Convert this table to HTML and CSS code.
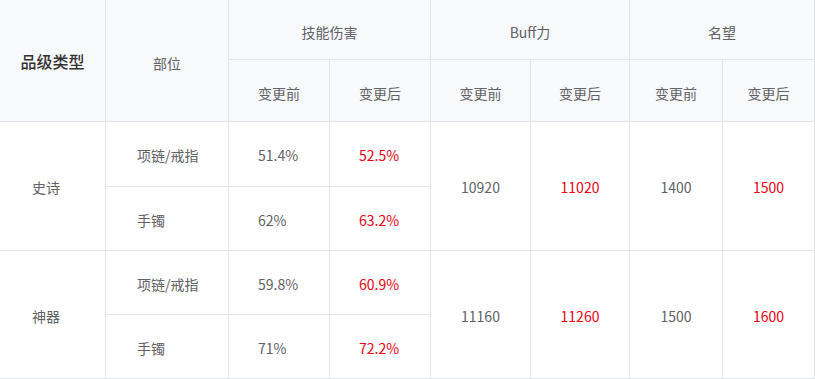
FILE: index.html
```html
<!DOCTYPE html>
<html lang="zh">
<head>
<meta charset="utf-8">
<link rel="stylesheet" href="styles.css">
</head>
<body>
<table class="tbl">
  <colgroup>
    <col class="c1"><col class="c2"><col class="c3"><col class="c4">
    <col class="c5"><col class="c6"><col class="c7"><col class="c8">
  </colgroup>
  <thead>
    <tr class="h1">
      <th rowspan="2" class="grade">品级类型</th>
      <th rowspan="2">部位</th>
      <th colspan="2">技能伤害</th>
      <th colspan="2">Buff力</th>
      <th colspan="2">名望</th>
    </tr>
    <tr class="h2">
      <th>变更前</th><th>变更后</th>
      <th>变更前</th><th>变更后</th>
      <th>变更前</th><th>变更后</th>
    </tr>
  </thead>
  <tbody>
    <tr class="r1">
      <td rowspan="2" class="type">史诗</td>
      <td class="part">项链/戒指</td>
      <td class="val">51.4%</td>
      <td class="val red">52.5%</td>
      <td rowspan="2" class="num">10920</td>
      <td rowspan="2" class="num red">11020</td>
      <td rowspan="2" class="num">1400</td>
      <td rowspan="2" class="num red">1500</td>
    </tr>
    <tr class="r2">
      <td class="part">手镯</td>
      <td class="val">62%</td>
      <td class="val red">63.2%</td>
    </tr>
    <tr class="r2">
      <td rowspan="2" class="type">神器</td>
      <td class="part">项链/戒指</td>
      <td class="val">59.8%</td>
      <td class="val red">60.9%</td>
      <td rowspan="2" class="num">11160</td>
      <td rowspan="2" class="num red">11260</td>
      <td rowspan="2" class="num">1500</td>
      <td rowspan="2" class="num red">1600</td>
    </tr>
    <tr class="r2">
      <td class="part">手镯</td>
      <td class="val">71%</td>
      <td class="val red">72.2%</td>
    </tr>
  </tbody>
</table>
</body>
</html>
```
FILE: styles.css
```css
html, body {
  margin: 0;
  padding: 0;
  background: #ffffff;
}
.tbl {
  border-collapse: separate;
  border-spacing: 0;
  table-layout: fixed;
  width: 815px;
  font-family: "Noto Sans CJK SC", "Noto Sans", sans-serif;
  font-size: 14px;
  color: #606266;
}
.c1 { width: 106px; }
.c2 { width: 123px; }
.c3 { width: 101px; }
.c4 { width: 101px; }
.c5 { width: 100px; }
.c6 { width: 99px; }
.c7 { width: 93px; }
.c8 { width: 92px; }
.tbl th, .tbl td {
  border-right: 1px solid #e2e4ea;
  border-bottom: 1px solid #e2e4ea;
  padding: 0;
  vertical-align: middle;
  box-sizing: border-box;
  line-height: 20px;
}
.tbl th {
  background: #f8f9fb;
  font-weight: normal;
  text-align: center;
  padding-top: 4px;
}
.tbl th.grade {
  color: #333333;
  font-size: 16px;
  font-weight: 500;
  padding-top: 0;
}
.h1 { height: 60px; }
.h2 { height: 62px; }
.r1 { height: 65px; }
.r2 { height: 64px; }
.tbl td {
  text-align: left;
  padding-top: 2px;
}
.tbl td.type { padding-left: 32px; }
.tbl td.part { padding-left: 31px; }
.tbl td.val { padding-left: 29px; }
.tbl td.num {
  text-align: center;
}
.red { color: #e60012; }
```
